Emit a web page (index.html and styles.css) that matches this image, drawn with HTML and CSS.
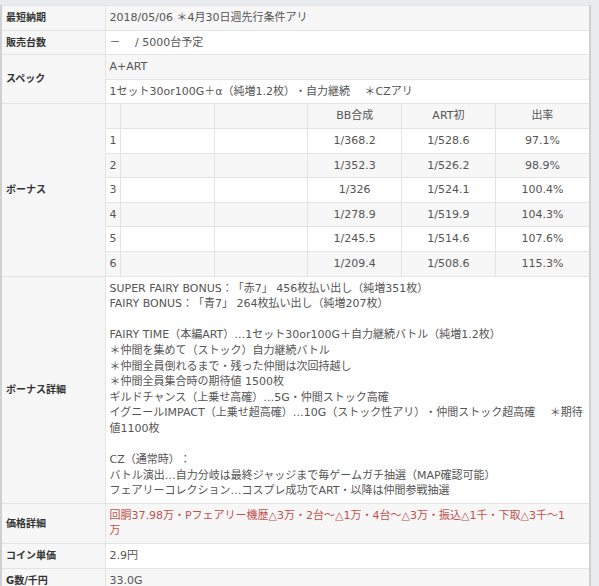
FILE: index.html
```html
<!DOCTYPE html>
<html lang="ja">
<head>
<meta charset="utf-8">
<title>スペック</title>
<link rel="stylesheet" href="styles.css">
</head>
<body>
<div class="page">
<table class="spec">
<colgroup><col class="c-label"><col></colgroup>
<tbody>
<tr class="odd"><th>最短納期</th><td>2018/05/06 ＊4月30日週先行条件アリ</td></tr>
<tr><th>販売台数</th><td>－　 / 5000台予定</td></tr>
<tr class="odd"><th rowspan="2">スペック</th><td>A+ART</td></tr>
<tr><td>1セット30or100G＋α（純増1.2枚）・自力継続　 ＊CZアリ</td></tr>
<tr class="odd"><th>ボーナス</th><td class="nest">
<table class="bonus">
<colgroup><col class="c-num"><col><col><col><col><col></colgroup>
<tbody>
<tr class="head"><td></td><td></td><td></td><td>BB合成</td><td>ART初</td><td>出率</td></tr>
<tr><td>1</td><td></td><td></td><td>1/368.2</td><td>1/528.6</td><td>97.1%</td></tr>
<tr class="alt"><td>2</td><td></td><td></td><td>1/352.3</td><td>1/526.2</td><td>98.9%</td></tr>
<tr><td>3</td><td></td><td></td><td>1/326</td><td>1/524.1</td><td>100.4%</td></tr>
<tr class="alt"><td>4</td><td></td><td></td><td>1/278.9</td><td>1/519.9</td><td>104.3%</td></tr>
<tr><td>5</td><td></td><td></td><td>1/245.5</td><td>1/514.6</td><td>107.6%</td></tr>
<tr class="alt"><td>6</td><td></td><td></td><td>1/209.4</td><td>1/508.6</td><td>115.3%</td></tr>
</tbody>
</table>
</td></tr>
<tr><th>ボーナス詳細</th><td>SUPER FAIRY BONUS：「赤7」 456枚払い出し（純増351枚）<br>FAIRY BONUS：「青7」 264枚払い出し（純増207枚）<br><br>FAIRY TIME（本編ART）…1セット30or100G＋自力継続バトル（純増1.2枚）<br>＊仲間を集めて（ストック）自力継続バトル<br>＊仲間全員倒れるまで・残った仲間は次回持越し<br>＊仲間全員集合時の期待値 1500枚<br>ギルドチャンス（上乗せ高確）…5G・仲間ストック高確<br>イグニールIMPACT（上乗せ超高確）…10G（ストック性アリ）・仲間ストック超高確　 ＊期待<br>値1100枚<br><br>CZ（通常時）：<br>バトル演出…自力分岐は最終ジャッジまで毎ゲームガチ抽選（MAP確認可能）<br>フェアリーコレクション…コスプレ成功でART・以降は仲間参戦抽選</td></tr>
<tr class="odd"><th>価格詳細</th><td class="price">回胴37.98万・Pフェアリー機歴△3万・2台～△1万・4台～△3万・振込△1千・下取△3千～1<br>万</td></tr>
<tr><th>コイン単価</th><td>2.9円</td></tr>
<tr class="odd"><th>G数/千円</th><td>33.0G</td></tr>
</tbody>
</table>
</div>
</body>
</html>
```
FILE: styles.css
```css
html, body {
  margin: 0;
  padding: 0;
}
body {
  background: #e9ecef;
  font-family: "DejaVu Sans", "Noto Sans CJK JP", sans-serif;
  font-size: 11px;
  line-height: 15.6px;
  color: #555;
  text-spacing-trim: space-all;
}
.page {
  padding-top: 5px;
}
.spec {
  width: 591px;
  border-collapse: collapse;
  table-layout: fixed;
  border: 2px solid #d0d0d0;
  border-top-width: 1px;
  background: #fff;
}
.c-label {
  width: 104px;
}
.spec > tbody > tr > th,
.spec > tbody > tr > td {
  border: 1px solid #e3e3e3;
  padding: 4px;
  text-align: left;
  vertical-align: middle;
}
.spec > tbody > tr > th {
  background: #f7f7f7;
  color: #333;
  font-size: 10px;
  font-weight: bold;
}
.spec > tbody > tr.odd > td {
  background: #f7f7f7;
}
.spec > tbody > tr > td.nest {
  padding: 0;
  background: #fff;
}
.bonus {
  width: 100%;
  border-collapse: collapse;
  table-layout: fixed;
  border-style: hidden;
}
.c-num {
  width: 15px;
}
.bonus td {
  border: 1px solid #e3e3e3;
  padding: 4px;
  height: 15.6px;
  text-align: center;
  vertical-align: middle;
  background: #fff;
}
.bonus td:first-child {
  text-align: left;
}
.bonus tr.head td,
.bonus tr.alt td {
  background: #f7f7f7;
}
.price {
  color: #c0504d;
}
```
